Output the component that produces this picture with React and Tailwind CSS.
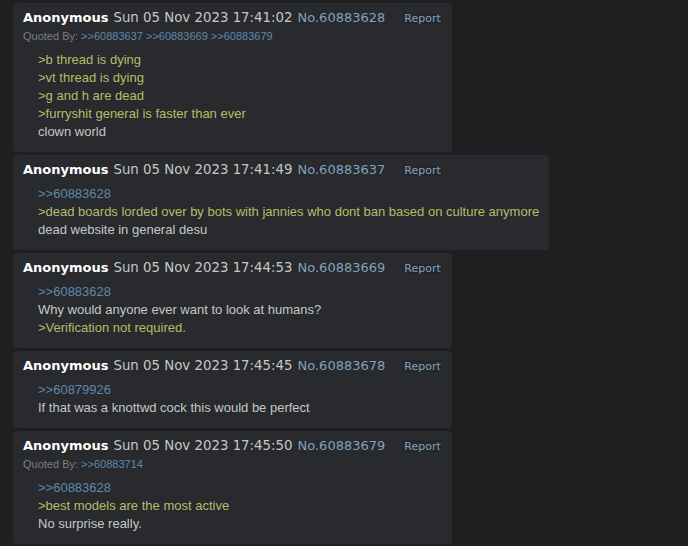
const posts = [
  {
    date: "Sun 05 Nov 2023 17:41:02",
    no: "60883628",
    quotedBy: ["60883637", "60883669", "60883679"],
    lines: [
      ["g", ">b thread is dying"],
      ["g", ">vt thread is dying"],
      ["g", ">g and h are dead"],
      ["g", ">furryshit general is faster than ever"],
      ["t", "clown world"],
    ],
  },
  {
    date: "Sun 05 Nov 2023 17:41:49",
    no: "60883637",
    lines: [
      ["q", ">>60883628"],
      ["g", ">dead boards lorded over by bots with jannies who dont ban based on culture anymore"],
      ["t", "dead website in general desu"],
    ],
  },
  {
    date: "Sun 05 Nov 2023 17:44:53",
    no: "60883669",
    lines: [
      ["q", ">>60883628"],
      ["t", "Why would anyone ever want to look at humans?"],
      ["g", ">Verification not required."],
    ],
  },
  {
    date: "Sun 05 Nov 2023 17:45:45",
    no: "60883678",
    lines: [
      ["q", ">>60879926"],
      ["t", "If that was a knottwd cock this would be perfect"],
    ],
  },
  {
    date: "Sun 05 Nov 2023 17:45:50",
    no: "60883679",
    quotedBy: ["60883714"],
    lines: [
      ["q", ">>60883628"],
      ["g", ">best models are the most active"],
      ["t", "No surprise really."],
    ],
  },
];

const lineClass = {
  g: "text-[#b5bd68]",
  q: "text-[#5f89ac]",
  t: "text-[#c5c8c6]",
};

function Post({ p }) {
  return (
    <div className="w-fit rounded-[4px] bg-[#282a2e] pl-[10px] pr-[8px] pt-[6px] pb-[12px]">
      <div className="flex h-[18px] items-center whitespace-nowrap font-['DejaVu_Sans',sans-serif] text-[13px] leading-[18px]">
        <span className="font-bold text-white">Anonymous</span>
        <span className="ml-[5px] text-[13.33px] text-[#c5c8c6]">{p.date}</span>
        <span className="ml-[5px] text-[#81a2be]">No.{p.no}</span>
        <span className="ml-[16px] rounded-[2px] border border-[#2c2e32] bg-[#25272b] px-[2px] text-[11px] leading-[13px] text-[#81a2be]">
          Report
        </span>
      </div>
      {p.quotedBy && (
        <div className="flex h-[17px] items-center whitespace-nowrap font-['Liberation_Sans',Arial,sans-serif] text-[11px] leading-4 text-[#7c7e80]">
          <span>
            Quoted By:{" "}
            {p.quotedBy.map((q, i) => (
              <span key={q} className="text-[#5f89ac]">
                {i > 0 ? " " : ""}&gt;&gt;{q}
              </span>
            ))}
          </span>
        </div>
      )}
      <div
        className={`${p.quotedBy ? "mt-[6px]" : "mt-[5px]"} pl-[15px] pr-[2px] font-['Liberation_Sans',Arial,sans-serif] text-[13px] leading-[18px]`}
      >
        {p.lines.map(([k, t], i) => (
          <div key={i} className={`h-[18px] whitespace-nowrap pt-px ${lineClass[k]}`}>
            {t}
          </div>
        ))}
      </div>
    </div>
  );
}

export default function App() {
  return (
    <div className="min-h-[546px] w-[688px] bg-[#1d1f21] pl-[13px] pt-[3px]">
      <div className="flex flex-col gap-[3px]">
        {posts.map((p) => (
          <Post key={p.no} p={p} />
        ))}
      </div>
    </div>
  );
}
